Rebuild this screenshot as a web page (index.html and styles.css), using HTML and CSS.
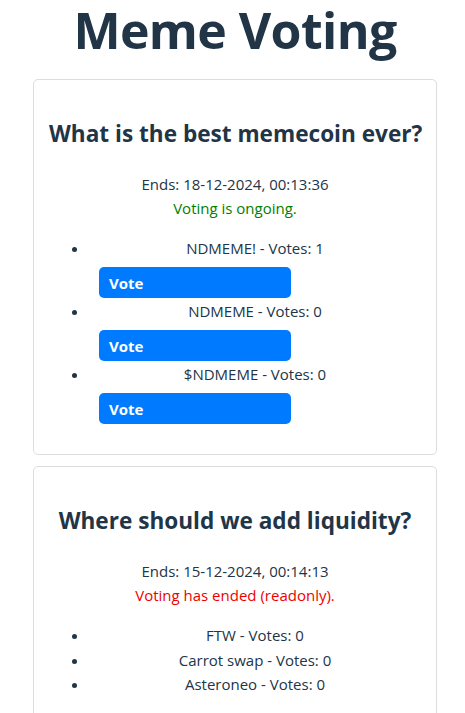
FILE: index.html
```html
<!DOCTYPE html>
<html>
<head>
<meta charset="utf-8">
<link rel="stylesheet" href="styles.css">
</head>
<body>
<div class="app">
  <h1 class="title">Meme Voting</h1>
  <div class="card">
    <h2 class="question">What is the best memecoin ever?</h2>
    <p class="meta">Ends: 18-12-2024, 00:13:36<br><span class="ongoing">Voting is ongoing.</span></p>
    <ul class="options">
      <li>NDMEME! - Votes: 1<button class="vote">Vote</button></li>
      <li>NDMEME - Votes: 0<button class="vote">Vote</button></li>
      <li>$NDMEME - Votes: 0<button class="vote">Vote</button></li>
    </ul>
  </div>
  <div class="card">
    <h2 class="question">Where should we add liquidity?</h2>
    <p class="meta">Ends: 15-12-2024, 00:14:13<br><span class="ended">Voting has ended (readonly).</span></p>
    <ul class="options readonly">
      <li>FTW - Votes: 0</li>
      <li>Carrot swap - Votes: 0</li>
      <li>Asteroneo - Votes: 0</li>
    </ul>
  </div>
</div>
</body>
</html>
```
FILE: styles.css
```css
html, body {
  margin: 0;
  padding: 0;
  background: #fff;
}
.app {
  font-family: "Open Sans", "Noto Sans", sans-serif;
  color: #213547;
  text-align: center;
  padding: 0 28px 0 33px;
  font-size: 15px;
}
.title {
  font-size: 50px;
  font-weight: 700;
  margin: 0 0 18px;
  line-height: 61px;
  letter-spacing: -0.6px;
}
.card {
  border: 1px solid #ddd;
  border-radius: 5px;
  padding: 15px;
  margin-bottom: 11px;
}
.question {
  font-size: 22.6px;
  font-weight: 700;
  margin: 24px 0 24px;
  line-height: 29px;
  white-space: nowrap;
}
.meta {
  margin: 0 0 16px;
  line-height: 24px;
}
.ongoing { color: #008000; }
.ended { color: #ee0000; }
.options {
  margin: 0 0 15px;
  padding-left: 40px;
}
.options li {
  line-height: 24px;
}
.options.readonly li {
  line-height: 24.5px;
}
.vote {
  display: block;
  width: 192px;
  height: 31px;
  margin: 7px 10px 1px;
  background: #007bff;
  color: #fff;
  border: none;
  border-radius: 5px;
  text-align: left;
  padding: 0 10px;
  font-family: inherit;
  font-size: 15px;
  font-weight: 700;
}
```
